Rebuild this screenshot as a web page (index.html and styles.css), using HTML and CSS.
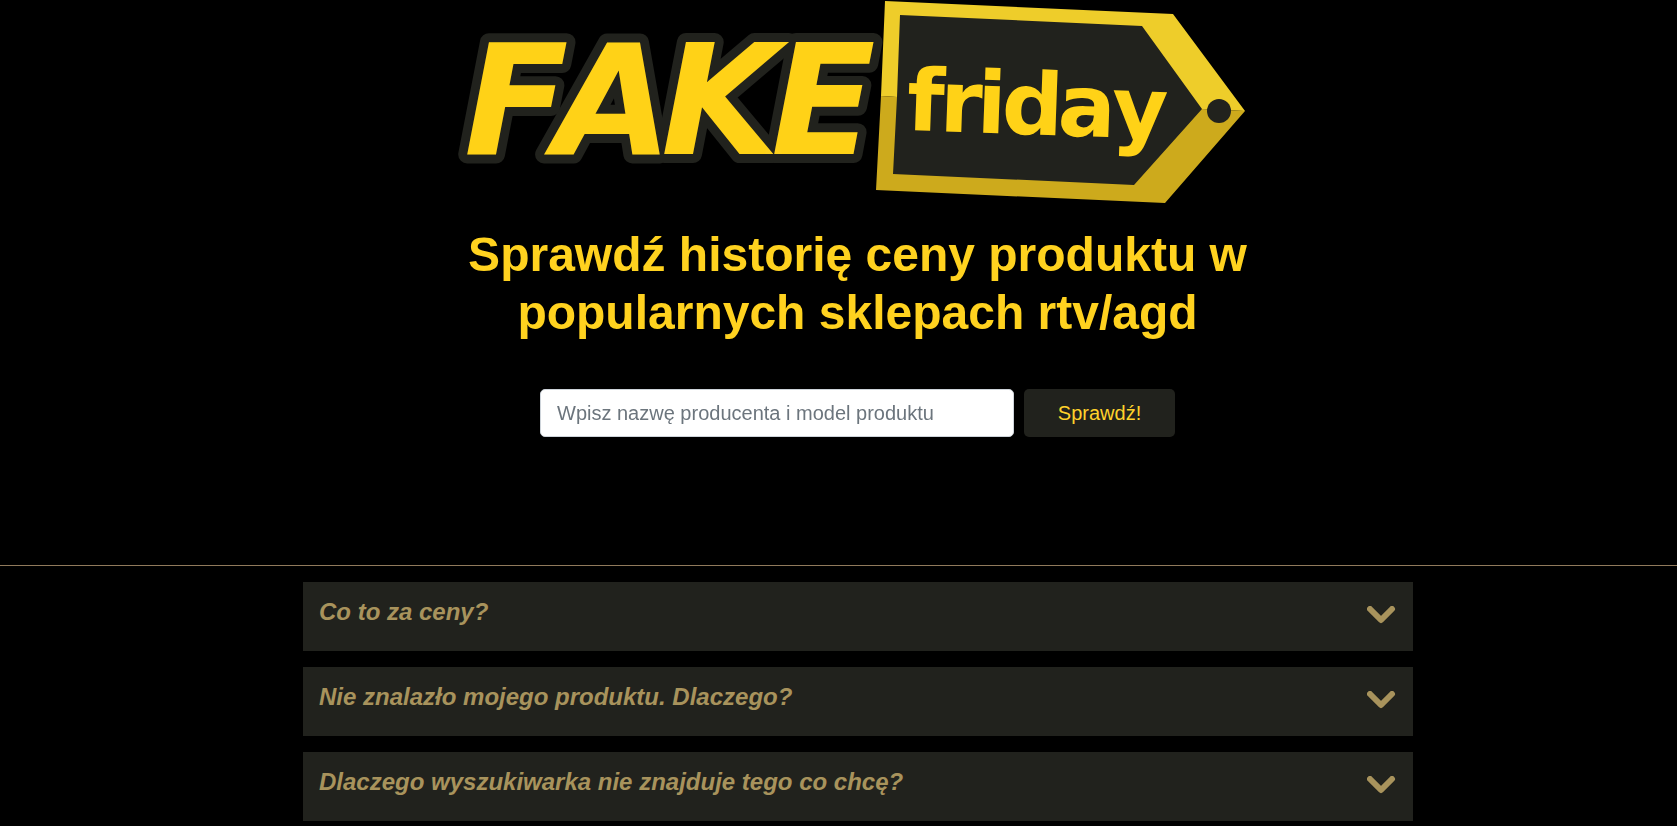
FILE: index.html
```html
<!DOCTYPE html>
<html lang="pl">
<head>
    <meta charset="UTF-8">
    <meta name="viewport" content="width=device-width, initial-scale=1.0">
    <title>Fake friday</title>

    <link rel="stylesheet" href="styles.css">
</head>
<body>

    <header class="top">

        <svg class="logo" viewBox="448 0 820 204" role="img" aria-label="Fake friday">
            <!-- napis FAKE z obwódką -->
            <text class="fake" x="464" y="154">F</text>
            <text class="fake" x="554" y="154">A</text>
            <text class="fake" x="661" y="154">K</text>
            <text class="fake" x="771" y="154">E</text>

            <!-- metka -->
            <path fill="#21221d" d="M898 13 L1144 25 L1206 109 L1134 186 L891 175 Z"/>
            <path fill="#eecd2a" d="M885 1 L1173 14 L1245 111 L1202 109 L1142 26 L900 15 L897 97 L881 96 Z"/>
            <path fill="#cdaa1c" d="M881 96 L897 97 L893 174 L1134 185 L1202 109 L1245 111 L1165 203 L876 190 Z"/>
            <circle cx="1219" cy="111" r="12" fill="#21221d"/>
            <text class="friday" x="906 939 976 1001 1057 1111" y="130" transform="rotate(2 906 130)">friday</text>
        </svg>

        <h1>Sprawdź historię ceny produktu w popularnych sklepach rtv/agd</h1>

        <form class="szukaj">
            <input type="text" name="produkt" aria-label="Nazwa produktu" placeholder="Wpisz nazwę producenta i model produktu">
            <button type="submit">Sprawdź!</button>
        </form>

    </header>

    <section class="faq">
        <div class="pytania">

            <button class="pytanie" type="button">
                <span>Co to za ceny?</span>
                <svg class="strzalka" viewBox="0 0 30 18"><path d="M3 3 L14 14 L25 3"/></svg>
            </button>

            <button class="pytanie" type="button">
                <span>Nie znalazło mojego produktu. Dlaczego?</span>
                <svg class="strzalka" viewBox="0 0 30 18"><path d="M3 3 L14 14 L25 3"/></svg>
            </button>

            <button class="pytanie" type="button">
                <span>Dlaczego wyszukiwarka nie znajduje tego co chcę?</span>
                <svg class="strzalka" viewBox="0 0 30 18"><path d="M3 3 L14 14 L25 3"/></svg>
            </button>

        </div>
    </section>

</body>
</html>
```

FILE: styles.css
```css
*{
    box-sizing: border-box;
}

body{
    margin: 0;
    background-color: #000;
    font-family: "Liberation Sans", Arial, sans-serif;
}

.top{
    display: flex;
    flex-direction: column;
    align-items: center;
    padding: 0 0 128px 38px;
}

.logo{
    width: 100%;
    max-width: 820px;
}

/* lighten: obwódka jednej litery nie zasłania sąsiedniej */
.fake{
    font-family: "DejaVu Sans", Verdana, sans-serif;
    font-size: 153px;
    font-weight: bold;
    font-style: italic;
    fill: #ffd217;
    stroke: #21221d;
    stroke-width: 18px;
    stroke-linejoin: round;
    paint-order: stroke;
    mix-blend-mode: lighten;
}

.friday{
    font-family: "DejaVu Sans", Verdana, sans-serif;
    font-size: 86px;
    font-weight: bold;
    fill: #ffd217;
}

h1{
    max-width: 825px;
    margin: 22px 0 47px;
    color: #ffd21f;
    font-size: 48px;
    line-height: 58px;
    text-align: center;
}

.szukaj{
    display: flex;
    gap: 10px;
    width: 100%;
    max-width: 635px;
}

.szukaj input, .szukaj button{
    height: 48px;
    border-radius: 5px;
    font-family: inherit;
    font-size: 20px;
}

.szukaj input{
    flex: 1;
    min-width: 0;
    padding: 8px 16px;
    border: 1px solid #ced4da;
    background-color: #fff;
}

.szukaj input::placeholder{
    color: #6c757d;
}

.szukaj button{
    width: 151px;
    border: 0;
    background-color: #21221d;
    color: #ffd22b;
}

.faq{
    padding: 16px 0 16px 39px;
    border-top: 1px solid #907a5c;
}

.pytania{
    display: flex;
    flex-direction: column;
    gap: 16px;
    max-width: 1110px;
    margin: 0 auto;
}

.pytanie{
    display: flex;
    justify-content: space-between;
    align-items: center;
    width: 100%;
    padding: 15px 16px 25px;
    border: 0;
    background-color: #21221d;
    color: #a8935c;
    font-family: inherit;
    font-size: 24px;
    font-weight: bold;
    font-style: italic;
    line-height: 29px;
    text-align: left;
}

.strzalka{
    width: 30px;
    margin-top: 7px;
    fill: none;
    stroke: #a8935c;
    stroke-width: 6px;
    stroke-linecap: round;
    stroke-linejoin: round;
}
```
